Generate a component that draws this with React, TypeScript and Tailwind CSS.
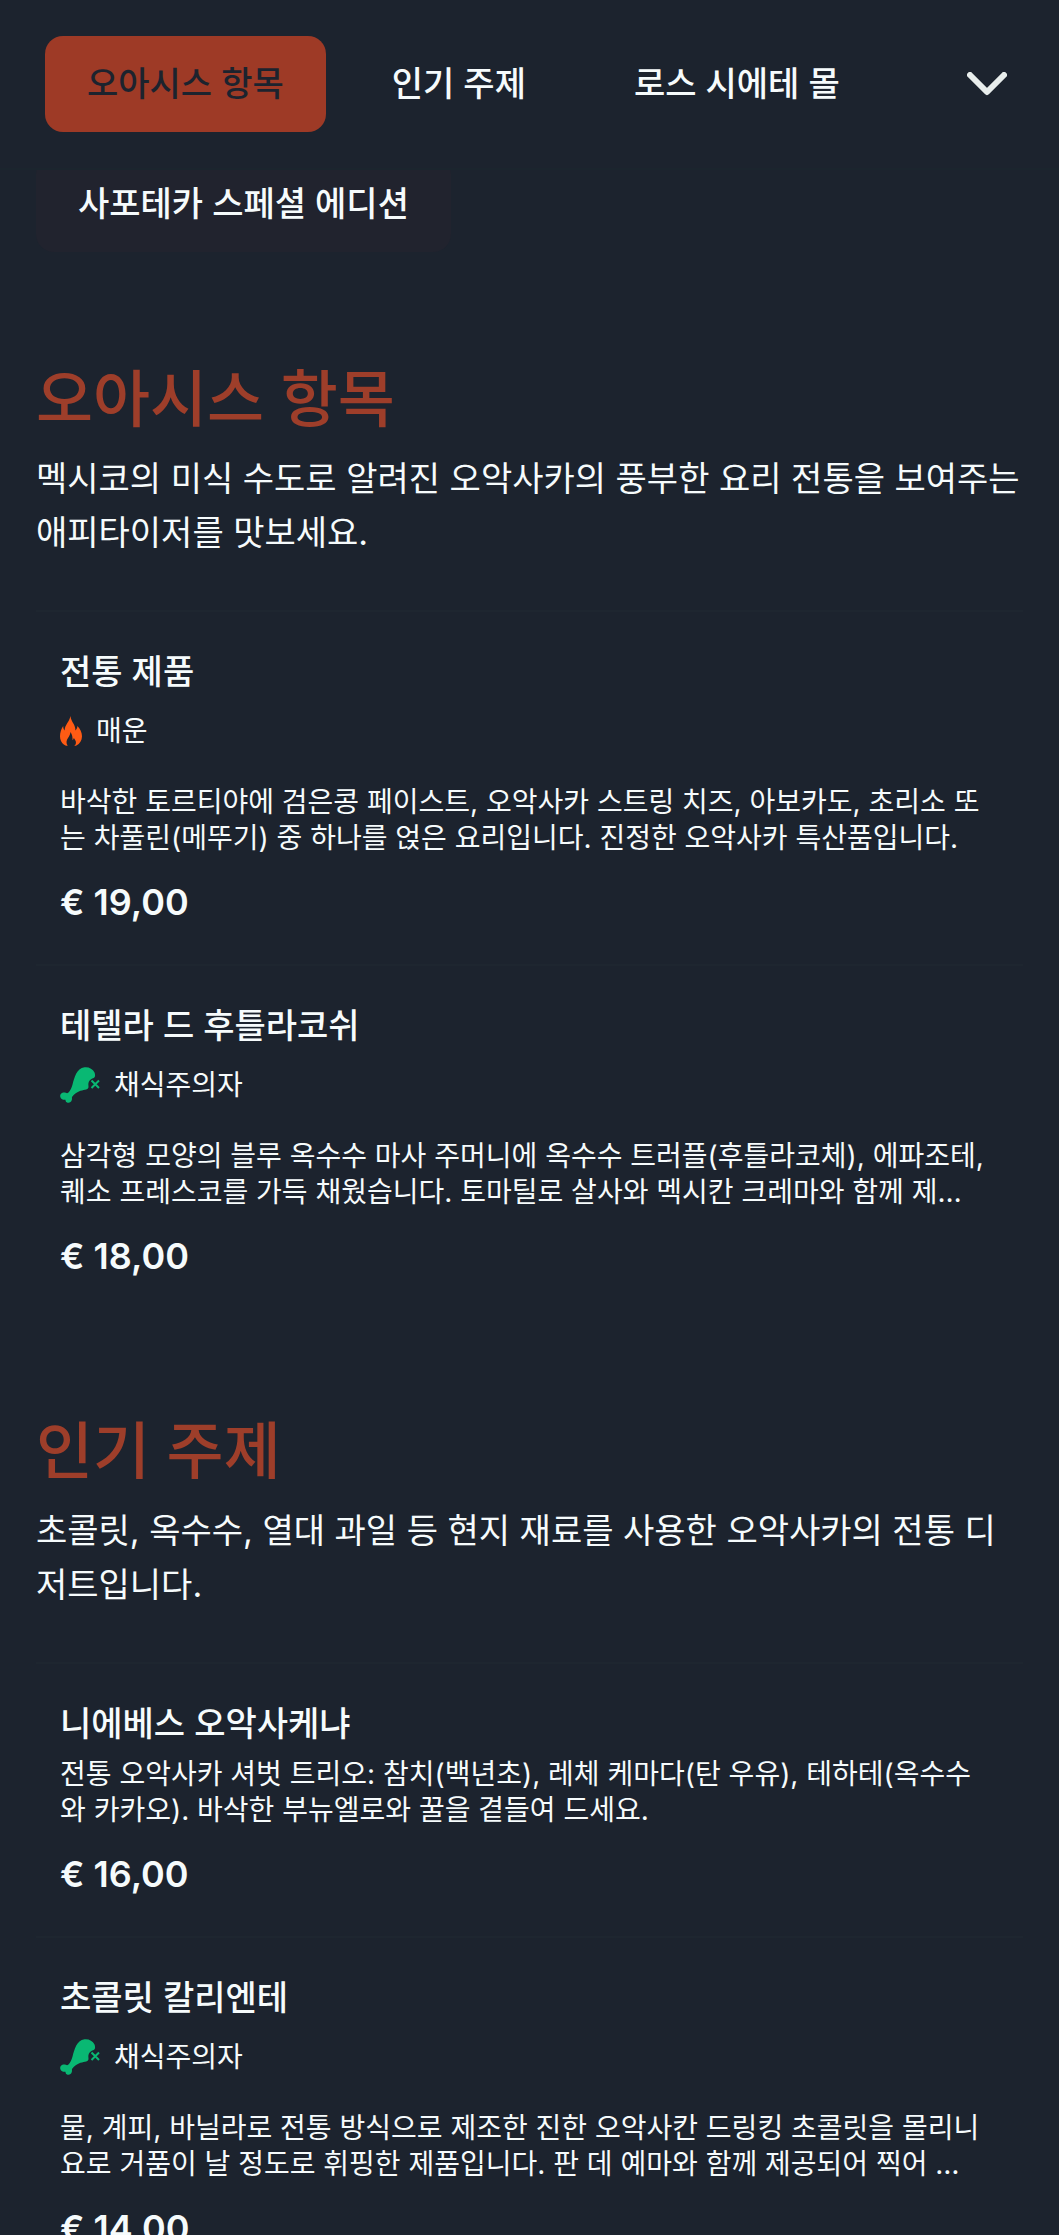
import { useState } from 'react';

const CATEGORIES = ['오아시스 항목', '인기 주제', '로스 시에테 몰'];

type Tag = 'spicy' | 'vegetarian';

type Dish = {
  name: string;
  tag?: Tag;
  description: string;
  price: string;
};

type MenuSection = {
  title: string;
  description: string;
  dishes: Dish[];
};

const SECTIONS: MenuSection[] = [
  {
    title: '오아시스 항목',
    description: '멕시코의 미식 수도로 알려진 오악사카의 풍부한 요리 전통을 보여주는 애피타이저를 맛보세요.',
    dishes: [
      {
        name: '전통 제품',
        tag: 'spicy',
        description:
          '바삭한 토르티야에 검은콩 페이스트, 오악사카 스트링 치즈, 아보카도, 초리소 또는 차풀린(메뚜기) 중 하나를 얹은 요리입니다. 진정한 오악사카 특산품입니다.',
        price: '€ 19,00',
      },
      {
        name: '테텔라 드 후틀라코쉬',
        tag: 'vegetarian',
        description:
          '삼각형 모양의 블루 옥수수 마사 주머니에 옥수수 트러플(후틀라코체), 에파조테, 퀘소 프레스코를 가득 채웠습니다. 토마틸로 살사와 멕시칸 크레마와 함께 제…',
        price: '€ 18,00',
      },
    ],
  },
  {
    title: '인기 주제',
    description: '초콜릿, 옥수수, 열대 과일 등 현지 재료를 사용한 오악사카의 전통 디저트입니다.',
    dishes: [
      {
        name: '니에베스 오악사케냐',
        description:
          '전통 오악사카 셔벗 트리오: 참치(백년초), 레체 케마다(탄 우유), 테하테(옥수수와 카카오). 바삭한 부뉴엘로와 꿀을 곁들여 드세요.',
        price: '€ 16,00',
      },
      {
        name: '초콜릿 칼리엔테',
        tag: 'vegetarian',
        description:
          '물, 계피, 바닐라로 전통 방식으로 제조한 진한 오악사칸 드링킹 초콜릿을 몰리니요로 거품이 날 정도로 휘핑한 제품입니다. 판 데 예마와 함께 제공되어 찍어 …',
        price: '€ 14,00',
      },
    ],
  },
];

const FlameIcon = () => (
  <svg className="h-[30px] w-[22px]" viewBox="0 0 22 30" fill="#ff5b14" aria-hidden="true">
    <path d="M10.500 0c.2 3.200 1.600 5.200 3 7.800 1.200 2.200 1.900 4.200 1.900 6.600 1.200-1 1.900-2.400 2-4.400 2.800 3 4.600 6.400 4.600 10.200 0 4.200-2.200 7.400-5.600 9.300-.8.400-1.500.5-2.100.4 1.400-1 1.900-2.500 1.500-4.300-.4-1.500-1.200-2.500-2-3.600-.2 1-.6 1.700-1.300 2.300.2-3-.3-5.600-2-8.300-.3 2.600-1.300 4.200-2.500 6-1.600 2.300-2.200 5.200-.3 7.800-1.300.2-2.700-.4-3.900-1.300C1.400 26.700 0 23.800 0 20.300c0-3.800 1.300-7.200 3.200-10.200 0 1.900.4 3.200 1.400 4.300C4.800 8.800 9.300 5.800 10.500 0Z" />
  </svg>
);

const VegetarianIcon = () => (
  <svg className="h-9 w-10" viewBox="0 0 40 36" fill="#09b873" aria-hidden="true">
    <path d="M24.500.3c4.300-.5 8.300 1.600 9.900 5 .8 1.700.9 3.500.3 4.800-.7 1.300-2.100 1.100-3.600 2.200-2.200 1.600-3 3.600-2.700 6 .1 1.400.3 2.500-.5 3.300-1.400 1.500-6.600 1.400-10.500 3.600-2.300 1.300-4.500 3.100-5.200 4.500-.6 1.200.1 1.700-.4 3.300-.6 2.100-2.400 3.200-4.200 2.700-1.500-.4-2-1.500-2.200-3-1.700.3-3.200 0-4.300-1.200C-.1 30.300-.2 28.200 1 26.800c1.300-1.500 3.300-1.700 4.800-1 .9.400 1.500.6 2.400-.1 2-1.600 3.300-4.700 4.400-8.500 1.700-5.900 3.800-15.900 11.900-16.900Z" />
    <path d="m31.500 13.500 7.500 7.500m0-7.500L31.500 21" fill="none" stroke="#09b873" strokeWidth="2" />
  </svg>
);

const TAGS: Record<Tag, { label: string; icon: React.ReactNode }> = {
  spicy: { label: '매운', icon: <FlameIcon /> },
  vegetarian: { label: '채식주의자', icon: <VegetarianIcon /> },
};

const DishItem = ({ dish }: { dish: Dish }) => {
  const tag = dish.tag ? TAGS[dish.tag] : null;

  return (
    <li className="border-t-2 border-[#1e2630] px-6 pt-9 pb-[38px]">
      <h3 className="mb-2 text-[34px] leading-12 font-medium">{dish.name}</h3>
      {tag && (
        <div className="flex items-center gap-3.5 pt-1.5 pb-8 text-[28px] leading-[42px]">
          {tag.icon}
          <span>{tag.label}</span>
        </div>
      )}
      <p className="pr-2 text-[28px] leading-9">{dish.description}</p>
      <p className="mt-[22px] text-[36px] leading-12 font-semibold">{dish.price}</p>
    </li>
  );
};

const CategoryBar = () => {
  const [active, setActive] = useState(CATEGORIES[0]);

  return (
    <header className="sticky top-0 z-10 flex items-center justify-between border-b-2 border-[#1b252e] bg-[#1c232e] py-9 pr-12 pl-[45px]">
      <nav className="flex gap-6">
        {CATEGORIES.map((category) => (
          <button
            key={category}
            type="button"
            onClick={() => setActive(category)}
            className={`rounded-[18px] px-[42px] py-6 text-[34px] leading-12 font-medium whitespace-nowrap ${
              category === active ? 'bg-[#9e3a26] text-[#1c232e]' : ''
            }`}
          >
            {category}
          </button>
        ))}
      </nav>
      <button type="button" aria-label="모든 카테고리" className="p-1">
        <svg className="h-6 w-10" viewBox="0 0 40 24" fill="none" stroke="#e8edec" strokeWidth="6" strokeLinecap="round" strokeLinejoin="round">
          <path d="m3 3 17 17L37 3" />
        </svg>
      </button>
    </header>
  );
};

export default function App() {
  return (
    <div className="min-h-screen bg-[#1c232e] font-['Inter','Noto_Sans_CJK_KR',sans-serif] text-[#f6fbfc]" lang="ko">
      <CategoryBar />
      <main className="-mt-3.5 px-9">
        <button type="button" className="rounded-[18px] bg-[#21232e] px-[42px] py-6 text-[34px] leading-12 font-medium">
          사포테카 스페셜 에디션
        </button>

        <div className="mt-[108px] space-y-[94px]">
          {SECTIONS.map((section) => (
            <section key={section.title}>
              <h2 className="text-[62px] leading-20 font-medium text-[#9e3e2a]">{section.title}</h2>
              <p className="mt-3 text-[34px] leading-[54px]">{section.description}</p>
              <ul className="mt-[50px]">
                {section.dishes.map((dish) => (
                  <DishItem key={dish.name} dish={dish} />
                ))}
              </ul>
            </section>
          ))}
        </div>
      </main>
    </div>
  );
}
